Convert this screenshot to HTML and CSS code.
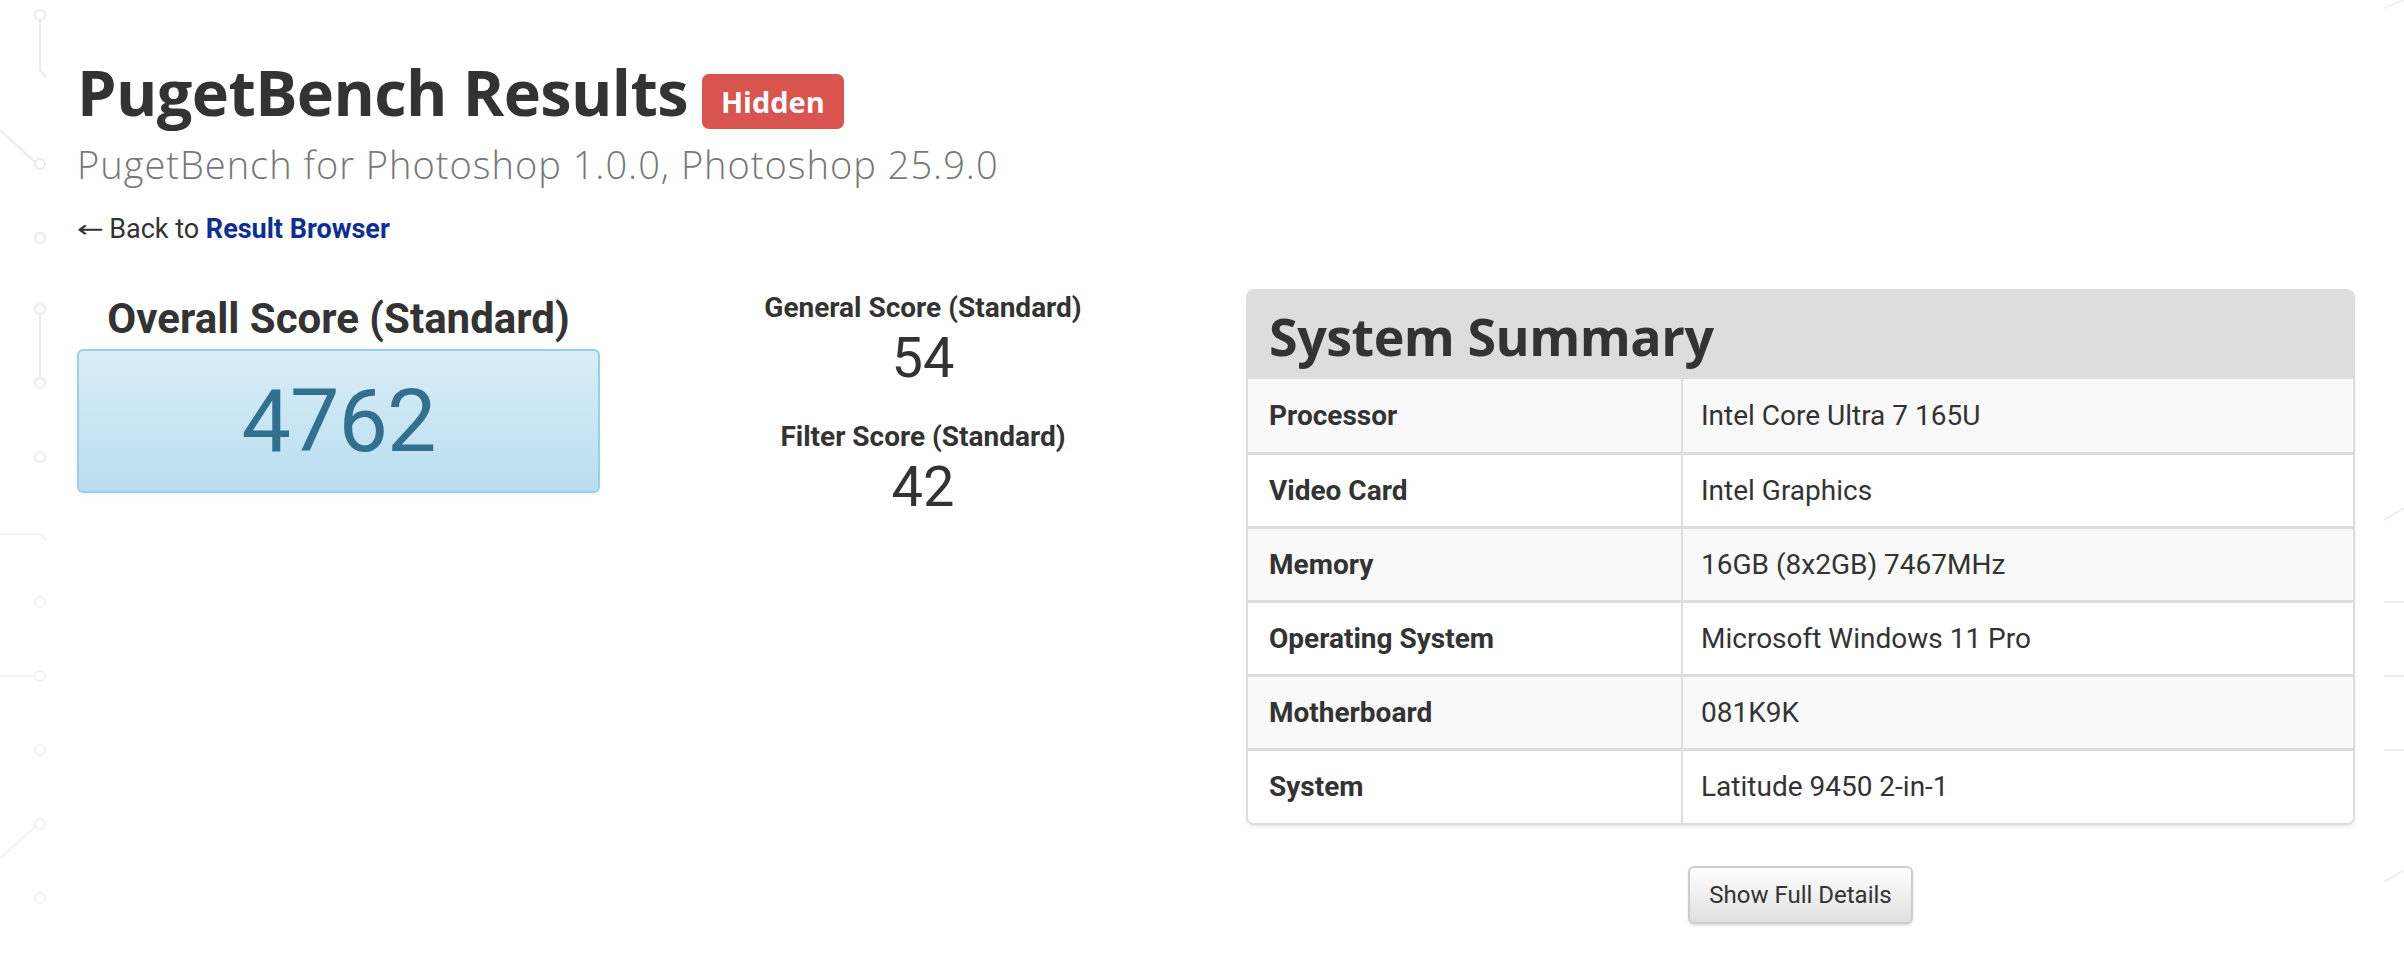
FILE: index.html
```html
<!DOCTYPE html>
<html lang="en">
<head>
<meta charset="utf-8">
<title>PugetBench Results</title>
<link rel="stylesheet" href="styles.css">
</head>
<body>
<svg class="deco deco-left" width="60" height="962" viewBox="0 0 60 962" aria-hidden="true">
  <g fill="none" stroke="#ebebeb" stroke-width="2">
    <path d="M40 20 V70 L46 78"/>
    <circle cx="40" cy="15" r="5"/>
    <path d="M0 130 L35 162"/>
    <circle cx="40" cy="164" r="5"/>
    <circle cx="40" cy="238" r="5"/>
    <path d="M40 314 V378"/>
    <circle cx="40" cy="309" r="5"/>
    <circle cx="40" cy="383" r="5"/>
    <circle cx="40" cy="457" r="5"/>
  </g>
  <g fill="none" stroke="#f2f2f2" stroke-width="2">
    <path d="M0 534 H40 L46 540"/>
    <circle cx="40" cy="602" r="5"/>
    <path d="M0 676 H35"/>
    <circle cx="40" cy="676" r="5"/>
    <circle cx="40" cy="750" r="5"/>
    <path d="M0 858 L36 826"/>
    <circle cx="40" cy="824" r="5"/>
    <circle cx="40" cy="898" r="5"/>
  </g>
</svg>
<svg class="deco deco-right" width="20" height="962" viewBox="0 0 20 962" aria-hidden="true">
  <g fill="none" stroke="#eeeeee" stroke-width="2">
    <path d="M0 8 L20 0"/>
    <path d="M0 520 L20 508"/>
    <path d="M0 602 H20"/>
    <path d="M0 676 H20"/>
    <path d="M0 750 H20"/>
    <path d="M0 882 L20 870"/>
  </g>
</svg>

<div class="page">
  <header class="head">
    <h1 class="title">PugetBench Results <span class="badge">Hidden</span></h1>
    <p class="subtitle">PugetBench for Photoshop 1.0.0, Photoshop 25.9.0</p>
    <p class="back"><span class="arrow">&larr;</span> Back to <a href="#" class="back-link">Result Browser</a></p>
  </header>

  <main class="results">
    <section class="overall">
      <h3 class="overall-title">Overall Score (Standard)</h3>
      <div class="overall-box">4762</div>
    </section>

    <section class="subscores">
      <div class="sub">
        <h4 class="sub-title">General Score (Standard)</h4>
        <div class="sub-value">54</div>
      </div>
      <div class="sub">
        <h4 class="sub-title">Filter Score (Standard)</h4>
        <div class="sub-value">42</div>
      </div>
    </section>

    <section class="summary">
      <div class="summary-card">
        <h2 class="summary-head">System Summary</h2>
        <table class="summary-table">
          <tr><th>Processor</th><td>Intel Core Ultra 7 165U</td></tr>
          <tr><th>Video Card</th><td>Intel Graphics</td></tr>
          <tr><th>Memory</th><td>16GB (8x2GB) 7467MHz</td></tr>
          <tr><th>Operating System</th><td>Microsoft Windows 11 Pro</td></tr>
          <tr><th>Motherboard</th><td>081K9K</td></tr>
          <tr><th>System</th><td>Latitude 9450 2-in-1</td></tr>
        </table>
      </div>
      <div class="details-wrap">
        <button class="btn-details" type="button">Show Full Details</button>
      </div>
    </section>
  </main>
</div>
</body>
</html>
```
FILE: styles.css
```css
* { box-sizing: border-box; }

html, body {
  margin: 0;
  padding: 0;
  background: #ffffff;
}

body {
  font-family: Roboto, "Liberation Sans", Arial, sans-serif;
  font-size: 28px;
  color: #333333;
  position: relative;
  min-height: 962px;
  overflow: hidden;
}

.deco {
  position: absolute;
  top: 0;
  z-index: 0;
}
.deco-left { left: 0; }
.deco-right { right: 0; }

.page {
  position: relative;
  z-index: 1;
  padding: 0 49px 0 77px;
}

.head {
  padding-top: 52px;
}

.title {
  margin: 0;
  font-family: "Open Sans", "DejaVu Sans", sans-serif;
  font-weight: 700;
  font-size: 63px;
  line-height: 80px;
  color: #333333;
  letter-spacing: -0.6px;
  display: flex;
  align-items: center;
  gap: 14px;
}

.badge {
  display: inline-block;
  background: #d9534f;
  color: #ffffff;
  font-family: "Open Sans", "DejaVu Sans", sans-serif;
  font-weight: 700;
  font-size: 29px;
  line-height: 35px;
  padding: 10px 19px;
  border-radius: 7px;
  letter-spacing: 0;
  margin-top: 19px;
}

.subtitle {
  margin: 8px 0 0;
  font-family: "Open Sans", sans-serif;
  font-weight: 300;
  font-size: 38px;
  line-height: 48px;
  letter-spacing: 1px;
  color: #777777;
}

.back {
  margin: 24px 0 0;
  font-size: 27px;
  line-height: 34px;
  color: #333333;
}

.arrow {
  font-family: "DejaVu Sans", sans-serif;
  font-weight: 400;
  font-size: 28px;
  display: inline-block;
  transform: scaleX(1.15) scaleY(0.85);
  transform-origin: left center;
  margin-right: 2px;
}

.back-link {
  color: #0b2f94;
  font-weight: 700;
  text-decoration: none;
}

.results {
  display: grid;
  grid-template-columns: 523px 400px 1109px;
  column-gap: 123px;
  margin-top: 43px;
  align-items: start;
}

.overall-title {
  margin: 0;
  text-align: center;
  font-size: 42px;
  font-weight: 700;
  line-height: 60px;
  color: #333333;
}

.overall-box {
  margin-top: 0;
  height: 144px;
  border: 2px solid #9acfea;
  border-radius: 6px;
  background: linear-gradient(to bottom, #d9edf7 0%, #b9def0 100%);
  box-shadow: 0 2px 3px rgba(0,0,0,0.06);
  color: #31708f;
  font-size: 88px;
  letter-spacing: -1px;
  font-weight: 400;
  display: flex;
  align-items: center;
  justify-content: center;
  line-height: 1;
}

.subscores {
  text-align: center;
  padding-top: 2px;
}

.sub + .sub {
  margin-top: 29px;
}

.sub-title {
  margin: 0;
  font-size: 28px;
  font-weight: 700;
  line-height: 34px;
}

.sub-value {
  font-size: 56px;
  line-height: 66px;
  color: #333333;
}

.summary-card {
  border: 2px solid #dddddd;
  border-radius: 8px;
  overflow: hidden;
  box-shadow: 0 2px 3px rgba(0,0,0,0.08);
}

.summary-head {
  margin: 0;
  height: 88px;
  background: #dddddd;
  padding: 0 21px;
  display: flex;
  align-items: center;
  font-family: "Open Sans", "DejaVu Sans", sans-serif;
  font-weight: 700;
  font-size: 52px;
  color: #333333;
  letter-spacing: -0.5px;
}

.summary-table {
  width: 100%;
  border-collapse: collapse;
}

.summary-table tr:nth-child(odd) {
  background: #f9f9f9;
}
.summary-table tr:nth-child(even) {
  background: #ffffff;
}

.summary-table th,
.summary-table td {
  height: 74px;
  padding: 0 21px;
  text-align: left;
  vertical-align: middle;
  font-size: 28px;
  border-top: 3px solid #dddddd;
}
.summary-table tr:first-child th,
.summary-table tr:first-child td {
  border-top: none;
}

.summary-table th {
  width: 434px;
  font-weight: 700;
  border-right: 2px solid #dddddd;
}

.summary-table td {
  font-weight: 400;
  padding-left: 18px;
}

.details-wrap {
  display: flex;
  justify-content: center;
  margin-top: 41px;
}

.btn-details {
  font-family: Roboto, "Liberation Sans", sans-serif;
  font-size: 24px;
  color: #333333;
  padding: 0 16px;
  height: 58px;
  width: 225px;
  border: 2px solid #cccccc;
  border-radius: 6px;
  background: linear-gradient(to bottom, #ffffff 0%, #e0e0e0 100%);
  box-shadow: 0 2px 3px rgba(0,0,0,0.12), inset 0 1px 0 rgba(255,255,255,0.15);
  cursor: pointer;
}
```
